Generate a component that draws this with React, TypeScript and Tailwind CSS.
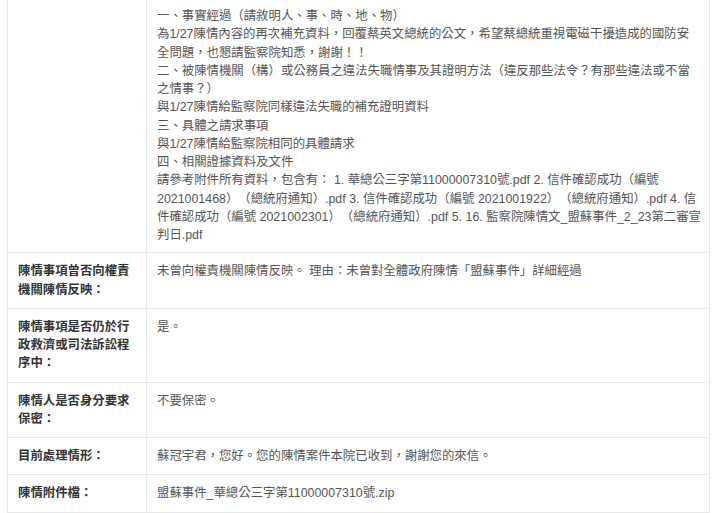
const font = {
  fontFamily: '"Liberation Sans", "Noto Sans CJK TC", sans-serif',
};

type Row = { label: string; value: string };

const rows: Row[] = [
  {
    label: "陳情事項曾否向權責機關陳情反映：",
    value: "未曾向權責機關陳情反映。 理由：未曾對全體政府陳情「盟蘇事件」詳細經過",
  },
  { label: "陳情事項是否仍於行政救濟或司法訴訟程序中：", value: "是。" },
  { label: "陳情人是否身分要求保密：", value: "不要保密。" },
  {
    label: "目前處理情形：",
    value: "蘇冠宇君，您好。您的陳情案件本院已收到，謝謝您的來信。",
  },
  { label: "陳情附件檔：", value: "盟蘇事件_華總公三字第11000007310號.zip" },
];

// paragraphs, split where the original page wraps
const detail: string[][] = [
  ["一、事實經過（請敘明人、事、時、地、物）"],
  [
    "為1/27陳情內容的再次補充資料，回覆蔡英文總統的公文，希望蔡總統重視電磁干擾造成的國防安",
    "全問題，也懇請監察院知悉，謝謝！！",
  ],
  [
    "二、被陳情機關（構）或公務員之違法失職情事及其證明方法（違反那些法令？有那些違法或不當",
    "之情事？）",
  ],
  ["與1/27陳情給監察院同樣違法失職的補充證明資料"],
  ["三、具體之請求事項"],
  ["與1/27陳情給監察院相同的具體請求"],
  ["四、相關證據資料及文件"],
  [
    "請參考附件所有資料，包含有： 1. 華總公三字第11000007310號.pdf 2. 信件確認成功（編號",
    "2021001468）（總統府通知）.pdf 3. 信件確認成功（編號 2021001922）（總統府通知）.pdf 4. 信",
    "件確認成功（編號 2021002301）（總統府通知）.pdf 5. 16. 監察院陳情文_盟蘇事件_2_23第二審宣",
    "判日.pdf",
  ],
];

export default function App() {
  return (
    <div
      className="w-[720px] h-[513px] bg-white overflow-hidden pl-[7px] [text-spacing-trim:space-all]"
      style={font}
    >
      <div className="w-[703px] border-x border-b border-[#e8e8e8] text-[12.4px] leading-[18.25px]">
        <div className="flex border-b border-[#e8e8e8]">
          <div className="w-[139px] shrink-0 border-r border-[#e8e8e8]" />
          <div className="flex-1 min-w-0 pl-[10px] pr-[10px] pt-[7px] pb-[8px] text-[#555]">
            {detail.map((para, i) => (
              <div key={i}>
                {para.map((line, j) => (
                  <div key={j} className="whitespace-nowrap">
                    {line}
                  </div>
                ))}
              </div>
            ))}
          </div>
        </div>
        {rows.map((row, i) => (
          <div
            key={i}
            className={`flex ${i < rows.length - 1 ? "border-b border-[#e8e8e8]" : ""}`}
          >
            <div className="w-[139px] shrink-0 border-r border-[#e8e8e8] pl-[10px] pr-[10px] py-[9px] font-bold text-[#333]">
              {row.label}
            </div>
            <div className="flex-1 pl-[10px] pr-[10px] py-[9px] text-[#555]">
              {row.value}
            </div>
          </div>
        ))}
      </div>
    </div>
  );
}
